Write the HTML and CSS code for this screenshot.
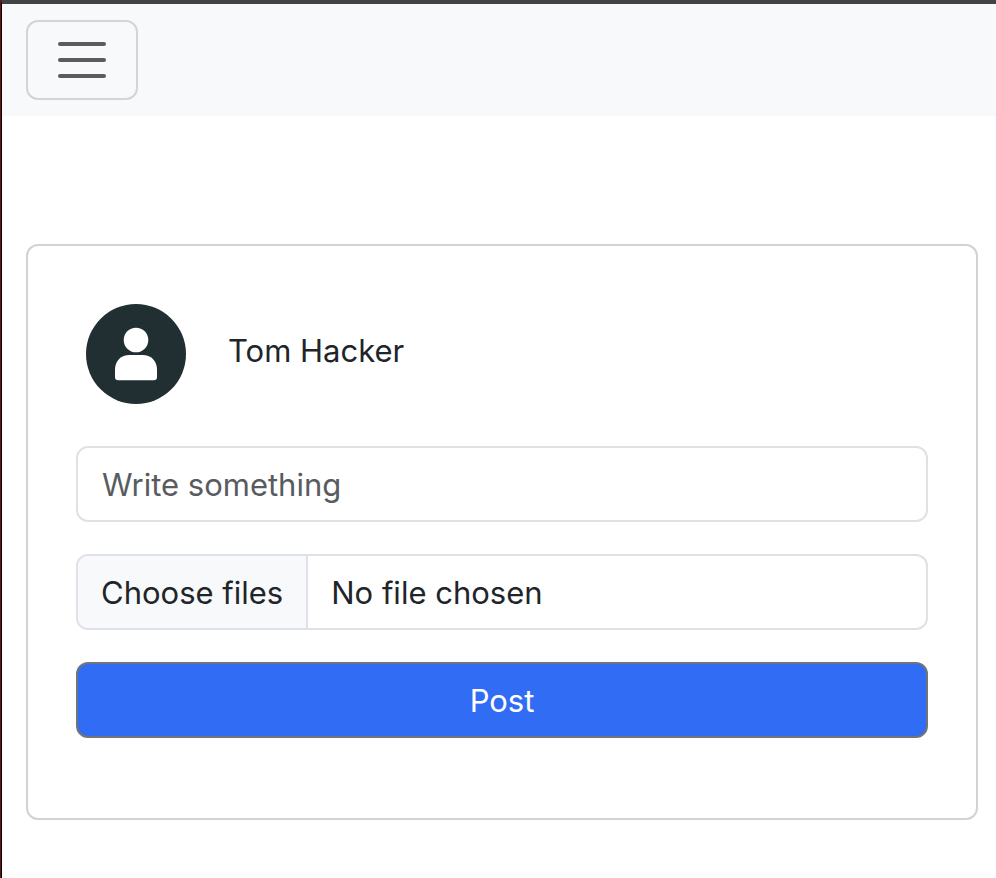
FILE: index.html
```html
<!DOCTYPE html>
<html lang="en">
<head>
<meta charset="utf-8">
<meta name="viewport" content="width=device-width, initial-scale=1">
<title>New post</title>
<link rel="stylesheet" href="styles.css">
</head>
<body>
<div class="page">
  <header class="navbar">
    <button class="navbar-toggler" type="button" aria-label="Toggle navigation">
      <svg class="toggler-icon" viewBox="0 0 60 60" aria-hidden="true">
        <path d="M8 14h44M8 30h44M8 46h44"/>
      </svg>
    </button>
  </header>
  <main class="content">
    <form class="card">
      <div class="author">
        <svg class="avatar" viewBox="0 0 100 100" aria-hidden="true">
          <circle class="avatar-disc" cx="50" cy="50" r="50"/>
          <circle class="avatar-person" cx="50" cy="36" r="12.3"/>
          <path class="avatar-person" d="M29 65.500C29 57 35 51 43.500 51h13C65 51 71 57 71 65.500V73q0 3.300-3.300 3.300H32.300Q29 76.300 29 73z"/>
        </svg>
        <span class="author-name">Tom Hacker</span>
      </div>
      <input class="control" type="text" placeholder="Write something" aria-label="Write something">
      <label class="control file-control">
        <input class="file-input" type="file" multiple>
        <span class="file-button">Choose files</span>
        <span class="file-status">No file chosen</span>
      </label>
      <button class="control submit" type="submit">Post</button>
    </form>
  </main>
</div>
</body>
</html>
```
FILE: styles.css
```css
*,
*::before,
*::after {
  box-sizing: border-box;
}

body {
  margin: 0;
  border-left: 1px solid #6b100b;
  color: #212529;
  background: #fff;
  font-family: Inter, "Liberation Sans", sans-serif;
  font-size: 31px;
  line-height: 48px;
}

.page {
  min-height: 100vh;
  border-top: 4px solid #434344;
  border-left: 1px solid #000;
}

.navbar {
  display: flex;
  padding: 16px 24px;
  background: #f8f9fb;
}

.navbar-toggler {
  display: flex;
  padding: 8px 24px;
  border: 2px solid #d3d4d6;
  border-radius: 12px;
  background: transparent;
}

.toggler-icon {
  width: 60px;
  height: 60px;
  fill: none;
  stroke: #5b5c5e;
  stroke-width: 4;
  stroke-linecap: round;
}

.content {
  padding: 128px 18px 58px 24px;
}

.card {
  display: flex;
  flex-direction: column;
  gap: 32px;
  padding: 48px 48px 80px;
  border: 2px solid #d2d2d2;
  border-radius: 12px;
}

.author {
  display: flex;
  align-items: center;
  gap: 42px;
  padding: 10px;
}

.avatar {
  width: 100px;
  height: 100px;
}

.avatar-disc {
  fill: #222f32;
}

.avatar-person {
  fill: #fff;
}

.author-name {
  padding-bottom: 6px;
}

.control {
  width: 100%;
  height: 76px;
  padding: 12px 24px;
  border: 2px solid #dee2e6;
  border-radius: 12px;
  background: #fff;
  color: inherit;
  font: inherit;
}

.control::placeholder {
  color: #595c5f;
  opacity: 1;
}

.file-control {
  display: flex;
  padding: 0;
  overflow: hidden;
}

.file-input {
  position: absolute;
  width: 1px;
  height: 1px;
  opacity: 0;
}

.file-button,
.file-status {
  padding: 13px 23px 11px;
}

.file-button {
  border-right: 2px solid #dee2e6;
  background: #f8f9fb;
}

.submit {
  padding: 13px 24px 11px;
  border-color: #6f757b;
  background: #316cf4;
  color: #fff;
}
```
